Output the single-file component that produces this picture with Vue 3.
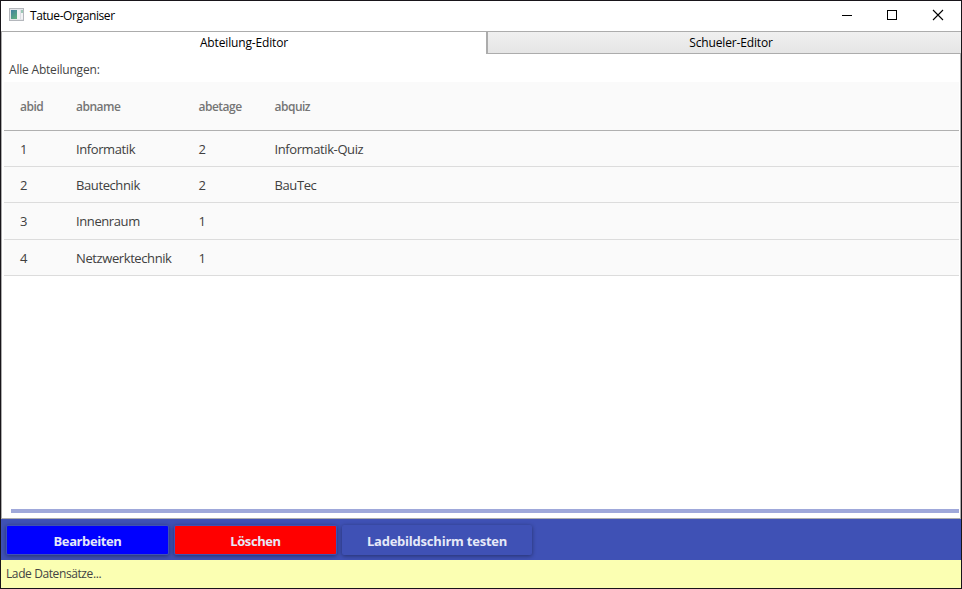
<script setup>
const columns = ['abid', 'abname', 'abetage', 'abquiz']
const rows = [
  ['1', 'Informatik', '2', 'Informatik-Quiz'],
  ['2', 'Bautechnik', '2', 'BauTec'],
  ['3', 'Innenraum', '1', ''],
  ['4', 'Netzwerktechnik', '1', ''],
]
</script>

<template>
  <div class="window">
    <header class="titlebar">
      <svg class="app-icon" width="16" height="14" viewBox="0 0 16 14" shape-rendering="crispEdges">
        <defs>
          <linearGradient id="screen" x1="0" y1="0" x2="0.6" y2="1">
            <stop offset="0" stop-color="#3f7fa0" />
            <stop offset="1" stop-color="#5bab80" />
          </linearGradient>
        </defs>
        <rect x="0.5" y="0.5" width="14" height="12" fill="#e4e6ea" stroke="#b4b7bc" />
        <rect x="2" y="2" width="6" height="9" fill="url(#screen)" />
        <rect x="8" y="2" width="3" height="9" fill="#f0f2f4" />
        <rect x="11" y="2" width="1" height="9" fill="#dcdfe4" />
        <rect x="12" y="2" width="2" height="3" fill="#9cc8b6" />
        <rect x="12" y="5" width="2" height="6" fill="#f2f3f5" />
      </svg>
      <span class="title">Tatue-Organiser</span>
      <div class="controls">
        <svg width="46" height="29" viewBox="0 0 46 29" shape-rendering="crispEdges"><path d="M18 14.5h10" stroke="#000" /></svg>
        <svg width="45" height="29" viewBox="0 0 45 29" shape-rendering="crispEdges"><rect x="17.5" y="9.5" width="9" height="9" fill="none" stroke="#000" /></svg>
        <svg width="46" height="29" viewBox="0 0 46 29"><path d="M18 9l10 10M28 9l-10 10" stroke="#000" stroke-width="1.1" /></svg>
      </div>
    </header>

    <nav class="tabs">
      <div class="tab active"><span>Abteilung-Editor</span></div>
      <div class="tab inactive"><span>Schueler-Editor</span></div>
    </nav>

    <main class="panel">
      <div class="label">Alle Abteilungen:</div>
      <div class="table">
        <div class="row head">
          <span v-for="c in columns" :key="c">{{ c }}</span>
        </div>
        <div v-for="row in rows" :key="row[0]" class="row">
          <span v-for="(cell, i) in row" :key="i">{{ cell }}</span>
        </div>
      </div>
      <div class="progress"></div>
    </main>

    <div class="toolbar">
      <button class="btn edit">Bearbeiten</button>
      <button class="btn delete">Löschen</button>
      <button class="btn test">Ladebildschirm testen</button>
    </div>
    <footer class="status">Lade Datensätze...</footer>
  </div>
</template>

<style>
body {
  margin: 0;
  overflow: hidden;
}
</style>

<style scoped>
.window {
  box-sizing: border-box;
  width: 962px;
  height: 589px;
  border: 1px solid #18151a;
  background: #fff;
  display: flex;
  flex-direction: column;
  font-family: "Segoe UI", "Open Sans", "Noto Sans", sans-serif;
  font-size: 12px;
  letter-spacing: -0.4px;
  color: #000;
  white-space: nowrap;
}
.titlebar {
  height: 30px;
  flex: none;
  display: flex;
  align-items: center;
  padding-left: 8px;
}
.app-icon {
  margin: 0 5px 2px 0;
}
.title {
  line-height: 30px;
}
.controls {
  margin-left: auto;
  display: flex;
  align-self: flex-start;
}
.tabs {
  height: 23px;
  flex: none;
  display: flex;
}
.tab {
  box-sizing: border-box;
  height: 23px;
  line-height: 22px;
  text-align: center;
  letter-spacing: -0.15px;
  border-top: 1px solid #acacac;
}
.active {
  width: 485px;
  border-left: 1px solid #acacac;
}
.inactive {
  flex: 1;
  padding-left: 13px;
  border-left: 2px solid #acacac;
  border-bottom: 1px solid #acacac;
  background: linear-gradient(#f0f0f0, #e5e5e5);
}
.panel {
  box-sizing: border-box;
  height: 465px;
  flex: none;
  display: flex;
  flex-direction: column;
  border: 1px solid #acacac;
  border-top: 0;
  padding: 0 1px 5px 2px;
}
.label {
  height: 28px;
  line-height: 32px;
  padding-left: 5px;
  letter-spacing: -0.2px;
  color: #444;
}
.table {
  background: #fafafa;
  color: #404040;
  font-size: 13px;
}
.row {
  box-sizing: border-box;
  height: 36px;
  line-height: 36px;
  display: grid;
  grid-template-columns: 56px 122.5px 76px 1fr;
  padding-left: 16px;
  border-bottom: 1px solid #dcdcdc;
}
.row:nth-child(4) {
  height: 37px;
}
.head {
  height: 49px;
  line-height: 50px;
  font-size: 12px;
  font-weight: 650;
  letter-spacing: -0.5px;
  color: #757575;
  border-color: #b0b0b0;
}
.progress {
  height: 4px;
  margin: auto 0 0 7px;
  background: #9fa8da;
}
.toolbar {
  box-sizing: border-box;
  height: 41px;
  flex: none;
  display: flex;
  align-items: flex-start;
  gap: 7px;
  padding: 7px 6px;
  background: #3f51b5;
}
.btn {
  box-sizing: border-box;
  width: 161px;
  height: 28px;
  padding: 0;
  border: 0;
  border-radius: 1px;
  font: 700 13px/30px "Segoe UI", "Open Sans", "Noto Sans", sans-serif;
  letter-spacing: -0.4px;
  color: #e6e9f8;
  box-shadow: 0 0 0 1px #3f51b5, 0 1px 4px 1px rgba(0, 0, 0, 0.4);
}
.edit {
  background: #00f;
}
.delete {
  background: #f00;
}
.test {
  width: 188px;
  letter-spacing: -0.22px;
  background: #3f51b5;
}
.status {
  flex: 1;
  line-height: 28px;
  padding-left: 5px;
  background: #fbffb2;
  color: #444;
}
</style>
